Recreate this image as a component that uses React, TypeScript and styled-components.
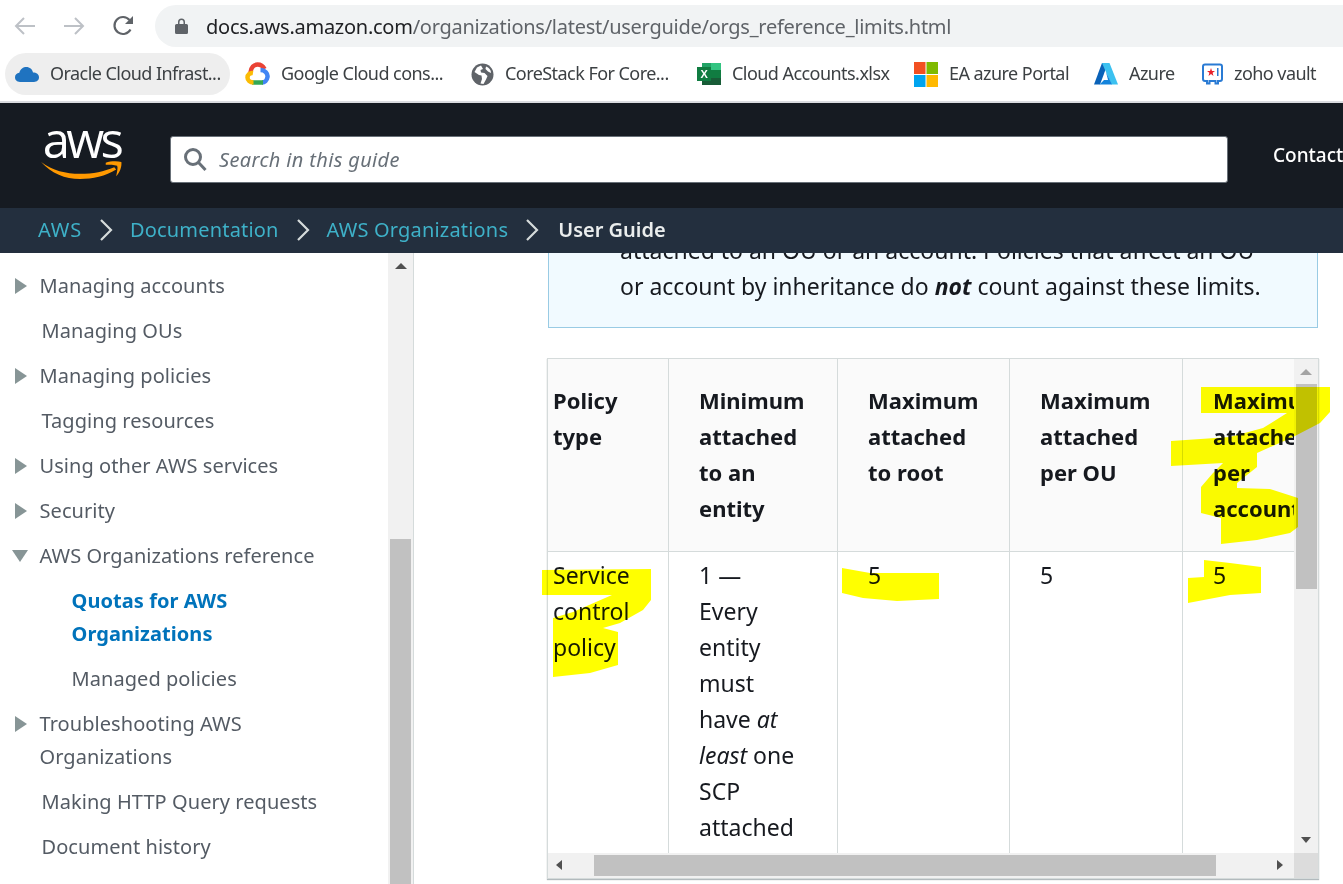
import React from "react";
import styled, { createGlobalStyle } from "styled-components";

const GlobalStyle = createGlobalStyle`
  html, body {
    margin: 0;
    padding: 0;
    background: #fff;
  }
  * {
    box-sizing: border-box;
  }
`;

const uiFont = `"Noto Sans", "Open Sans", Arial, sans-serif`;

const Page = styled.div`
  position: relative;
  width: 1343px;
  height: 884px;
  overflow: hidden;
  display: flex;
  flex-direction: column;
  font-family: ${uiFont};
  color: #16191f;
`;

const Toolbar = styled.div`
  height: 53px;
  display: flex;
  align-items: flex-start;
  padding: 5px 0 0 14px;
  flex-shrink: 0;
`;

const NavIcons = styled.div`
  width: 141px;
  height: 42px;
  display: flex;
  align-items: center;
  gap: 27px;
  flex-shrink: 0;
`;

const UrlBar = styled.div`
  flex: 1;
  height: 42px;
  margin-right: -30px;
  border-radius: 21px;
  background: #f1f3f4;
  display: flex;
  align-items: center;
  padding-left: 20px;
  gap: 18px;
  font-size: 20px;
  letter-spacing: -0.26px;
  color: #5f6368;
  white-space: nowrap;
`;

const Host = styled.span`
  color: #202124;
`;

const Bookmarks = styled.div`
  height: 50px;
  flex-shrink: 0;
  display: flex;
  align-items: flex-start;
  padding-left: 5px;
  gap: 5px;
  border-bottom: 2px solid #dadce0;
  white-space: nowrap;
`;

const Bookmark = styled.div<{ $active?: boolean; $width: number }>`
  width: ${(p) => p.$width}px;
  height: 42px;
  display: flex;
  align-items: center;
  gap: 11px;
  padding: 0 10px;
  border-radius: 21px;
  background: ${(p) => (p.$active ? "#eeeeee" : "transparent")};
  font-size: 18px;
  letter-spacing: -0.55px;
  color: #3c4043;
  flex-shrink: 0;
  svg {
    flex-shrink: 0;
  }
`;

const BookmarkLabel = styled.span`
  margin-top: -2px;
`;

const Header = styled.header`
  height: 105px;
  flex-shrink: 0;
  background: #161b22;
  display: flex;
  align-items: center;
  padding-left: 39px;
  white-space: nowrap;
`;

const Logo = styled.div`
  width: 85px;
  height: 56px;
  margin: -10px 46px 0 0;
  display: flex;
  flex-direction: column;
  align-items: center;
  flex-shrink: 0;
`;

const LogoWord = styled.span`
  font-family: "Open Sans", sans-serif;
  font-size: 49px;
  line-height: 36px;
  height: 36px;
  margin-top: -2px;
  margin-bottom: 3px;
  letter-spacing: -3.6px;
  color: #fff;
`;

const SearchBox = styled.div`
  width: 1058px;
  height: 47px;
  margin-top: 8px;
  flex-shrink: 0;
  background: #fff;
  border: 1px solid #687078;
  border-radius: 3px;
  display: flex;
  align-items: center;
  gap: 11px;
  padding-left: 12px;
  font-size: 20px;
  letter-spacing: 0.35px;
  font-style: italic;
  color: #687078;
`;

const ContactLink = styled.a`
  margin: 0 0 2px 45px;
  font-size: 19px;
  font-weight: 500;
  color: #fff;
`;

const Crumbs = styled.nav`
  height: 45px;
  flex-shrink: 0;
  background: #232f3e;
  display: flex;
  align-items: center;
  padding: 0 0 2px 38px;
  gap: 17px;
  font-size: 20px;
  letter-spacing: 0.18px;
  white-space: nowrap;
`;

const CrumbLink = styled.a<{ $spread?: boolean }>`
  color: #3eb1c8;
  letter-spacing: ${(p) => (p.$spread ? "0.8px" : "inherit")};
`;

const CrumbCurrent = styled.span`
  margin-left: 2px;
  color: #eaeded;
  font-weight: 600;
  letter-spacing: 0;
`;

const Body = styled.div`
  flex: 1;
  min-height: 0;
  display: flex;
`;

const Sidebar = styled.aside`
  width: 414px;
  flex-shrink: 0;
  display: flex;
  border-right: 1px solid #d5dbdb;
`;

const NavList = styled.ul`
  flex: 1;
  min-width: 0;
  margin: 0;
  padding: 15.5px 0 0;
  list-style: none;
  overflow: hidden;
  font-size: 20px;
  line-height: 33px;
  letter-spacing: 0.06px;
  color: #545b64;
`;

const NavItem = styled.li<{ $indent: number; $active?: boolean }>`
  position: relative;
  margin-bottom: 12px;
  padding-left: ${(p) => p.$indent}px;
  padding-right: 20px;
  color: ${(p) => (p.$active ? "#0073bb" : "inherit")};
  font-weight: ${(p) => (p.$active ? 700 : 400)};
`;

const Caret = styled.span<{ $open?: boolean }>`
  position: absolute;
  width: 0;
  height: 0;
  ${(p) =>
    p.$open
      ? `left: 12px;
         top: 11px;
         border-left: 8px solid transparent;
         border-right: 8px solid transparent;
         border-top: 12px solid #879596;`
      : `left: 15px;
         top: 9px;
         border-top: 8px solid transparent;
         border-bottom: 8px solid transparent;
         border-left: 12px solid #879596;`}
`;

const ScrollColumn = styled.div<{ $width: number }>`
  width: ${(p) => p.$width}px;
  flex-shrink: 0;
  background: #f1f1f1;
  display: flex;
  flex-direction: column;
  align-items: center;
`;

const ScrollThumbV = styled.div<{ $top: number; $height?: number }>`
  width: 21px;
  margin-top: ${(p) => p.$top}px;
  background: #c1c1c1;
  ${(p) => (p.$height ? `height: ${p.$height}px;` : "flex: 1;")}
  flex-shrink: 0;
`;

const ArrowUp = styled.span<{ $color: string; $top: number }>`
  width: 0;
  height: 0;
  margin-top: ${(p) => p.$top}px;
  border-left: 6px solid transparent;
  border-right: 6px solid transparent;
  border-bottom: 6px solid ${(p) => p.$color};
  flex-shrink: 0;
`;

const ArrowDown = styled.span`
  width: 0;
  height: 0;
  margin-top: auto;
  margin-bottom: 10px;
  border-left: 5px solid transparent;
  border-right: 5px solid transparent;
  border-top: 6px solid #505050;
`;

const Main = styled.main`
  flex: 1;
  min-width: 0;
  overflow: hidden;
  padding-left: 133px;
`;

const Note = styled.div`
  width: 770px;
  margin: -41px 0 0 1px;
  padding: 19px 0 23px 71px;
  background: #f1faff;
  border: 1px solid #99cbe4;
  font-size: 23px;
  line-height: 36px;
  white-space: nowrap;
`;

const TableFrame = styled.div`
  width: 772px;
  height: 521px;
  margin-top: 30px;
  border: 1px solid #d5dbdb;
  box-shadow: 0 1px 1px rgba(0, 28, 36, 0.3);
  display: grid;
  grid-template-columns: 746px 24px;
  grid-template-rows: 494px 25px;
`;

const TableViewport = styled.div`
  overflow: hidden;
`;

const QuotaTable = styled.table`
  width: 794px;
  table-layout: fixed;
  border-collapse: separate;
  border-spacing: 0;
  font-size: 23px;
  line-height: 36px;
`;

const HeadCell = styled.th<{ $pad: number; $width: number }>`
  width: ${(p) => p.$width}px;
  height: 192px;
  padding: 23px 24px 25px ${(p) => p.$pad}px;
  background: #fafafa;
  border-right: 1px solid #d5dbdb;
  border-bottom: 1px solid #d5dbdb;
  text-align: left;
  vertical-align: top;
  font-size: 22px;
  font-weight: 700;
`;

const BodyCell = styled.td<{ $pad: number }>`
  padding: 5px 38px 20px ${(p) => p.$pad}px;
  border-right: 1px solid #d5dbdb;
  vertical-align: top;
`;

const ScrollRow = styled.div`
  background: #f1f1f1;
  display: flex;
  align-items: center;
  padding: 0 0 1px 8px;
`;

const ScrollThumbH = styled.div`
  width: 622px;
  height: 21px;
  margin-left: 32px;
  background: #c1c1c1;
`;

const ArrowLeft = styled.span`
  width: 0;
  height: 0;
  border-top: 5px solid transparent;
  border-bottom: 5px solid transparent;
  border-right: 6px solid #505050;
`;

const ArrowRight = styled.span`
  width: 0;
  height: 0;
  margin-left: 61px;
  border-top: 5px solid transparent;
  border-bottom: 5px solid transparent;
  border-left: 6px solid #505050;
`;

const ScrollCorner = styled.div`
  background: #dcdcdc;
`;

const Marker = styled.svg`
  position: absolute;
  inset: 0;
  pointer-events: none;
  mix-blend-mode: multiply;
`;

const marks = [
  "1201,387 1330,387 1330,412 1320,423 1293,437 1257,453 1257,467 1237,483 1237,488 1270,489 1298,498 1298,527 1290,533 1257,540 1221,544 1221,518 1201,513 1201,487 1213,473 1223,463 1171,466 1171,441 1230,437 1263,428 1287,413 1201,413",
  "1204,560 1230,563 1261,567 1261,593 1230,595 1188,603 1188,578 1204,577",
  "842,568 870,573 939,573 939,599 897,601 863,598 842,593",
  "542,570 651,569 651,600 643,610 620,623 603,628 618,632 618,665 590,673 553,677 553,618 573,612 612,595 542,595",
];

const navItems = [
  { label: "Managing accounts", indent: 39.5, caret: "closed" },
  { label: "Managing OUs", indent: 41.5 },
  { label: "Managing policies", indent: 39.5, caret: "closed" },
  { label: "Tagging resources", indent: 41.5 },
  { label: "Using other AWS services", indent: 39.5, caret: "closed" },
  { label: "Security", indent: 39.5, caret: "closed" },
  { label: "AWS Organizations reference", indent: 39.5, caret: "open" },
  { label: "Quotas for AWS Organizations", indent: 71.5, active: true },
  { label: "Managed policies", indent: 71.5 },
  { label: "Troubleshooting AWS Organizations", indent: 39.5, caret: "closed" },
  { label: "Making HTTP Query requests", indent: 41.5 },
  { label: "Document history", indent: 41.5 },
  { label: "AWS glossary", indent: 41.5 },
];

const OracleIcon = () => (
  <svg width="24" height="16" viewBox="0 0 24 16">
    <path fill="#1f73c0" d="M5 16C2 16 0 14 0 11.300C0 8.800 1.800 7 4.300 6.800C5.300 3 8.300 1 11.300 1C14.800 1 17.300 3.300 18 6.500C21.500 6.500 24 8.500 24 11.300C24 14 22 16 19 16Z" />
  </svg>
);

const GoogleCloudIcon = () => (
  <svg width="25" height="24" viewBox="0 0 25 24" fill="none" strokeWidth="4.500">
    <path stroke="#ea4335" d="M5.500 10.500C6 5.500 9 2.500 12.500 2.500C15.500 2.500 18 4 19.500 7" />
    <path stroke="#4285f4" d="M15.500 8C20 8 23 11.500 22.500 15C22 18.500 19.500 20.500 17 20.500" />
    <path stroke="#34a853" d="M18 20.500H7" />
    <path stroke="#fbbc05" d="M8.500 20.500C5 20.500 2.500 18.500 2.500 15.500C2.500 12.500 5 10.500 8 11" />
  </svg>
);

const GlobeIcon = () => (
  <svg width="23" height="23" viewBox="0 0 23 23">
    <circle cx="11.500" cy="11.500" r="11" fill="#5f6368" />
    <path fill="#fff" d="M10 2.500L6 4.500L3.500 9L8 12L10.500 12.500L11 16L9.500 20.500L12.500 21L15 16.500L16.500 13L13.500 10L10 9.500L9.500 7L12 6ZM15 3.500L14.500 6L17 8.500L20 10C20 7 18 4.500 15 3.500Z" />
  </svg>
);

const ExcelIcon = () => (
  <svg width="24" height="22" viewBox="0 0 24 22">
    <rect x="5" width="19" height="22" fill="#21a366" />
    <rect x="14" width="10" height="7" fill="#33c481" />
    <rect x="5" y="15" width="19" height="7" fill="#185c37" />
    <rect x="14" y="7" width="10" height="8" fill="#107c41" />
    <rect y="4" width="14" height="14" fill="#107c41" />
    <text x="3.500" y="15" fontSize="11" fontWeight="700" fill="#fff" fontFamily="Liberation Sans, sans-serif">X</text>
  </svg>
);

const MicrosoftIcon = () => (
  <svg width="24" height="25" viewBox="0 0 24 25">
    <rect width="11.500" height="12" fill="#f25022" />
    <rect x="12.500" width="11.500" height="12" fill="#7fba00" />
    <rect y="13" width="11.500" height="12" fill="#00a4ef" />
    <rect x="12.500" y="13" width="11.500" height="12" fill="#ffb900" />
  </svg>
);

const AzureIcon = () => (
  <svg width="24" height="22" viewBox="0 0 24 22">
    <path fill="#0a62b8" d="M8 0H14L6 21.500H0Z" />
    <path fill="#3cc1f0" d="M8 0H15.500L24 21.500H17.500Z" />
    <path fill="#1384dc" d="M12 9L18 21.500H5.500L10 17H14Z" />
  </svg>
);

const ZohoIcon = () => (
  <svg width="21" height="22" viewBox="0 0 21 22">
    <path fill="none" stroke="#2a7bd4" strokeWidth="2" d="M3 1.500H18Q20 1.500 20 3.500V16Q20 18 18 18H16V20.500H13.500V18H7.500V20.500H5V18H3Q1 18 1 16V3.500Q1 1.500 3 1.500Z" />
    <path fill="#e8202a" d="M9 5L10 8H13L10.600 9.800L11.500 13L9 11L6.500 13L7.400 9.800L5 8H8Z" />
    <rect x="15" y="5" width="1.500" height="8" fill="#2a7bd4" />
  </svg>
);

const Chevron = () => (
  <svg width="14" height="24" viewBox="0 0 14 24" fill="none" stroke="#d5dbdb" strokeWidth="2.200">
    <path d="M2 2L12 12L2 22" />
  </svg>
);

export default function App() {
  return (
    <Page>
      <GlobalStyle />
      <Toolbar>
        <NavIcons>
          <svg width="22" height="20" viewBox="0 0 22 20" fill="none" stroke="#bdc1c6" strokeWidth="2">
            <path d="M21 10H2M10 2L2 10L10 18" />
          </svg>
          <svg width="22" height="20" viewBox="0 0 22 20" fill="none" stroke="#bdc1c6" strokeWidth="2">
            <path d="M1 10H20M12 2L20 10L12 18" />
          </svg>
          <svg width="22" height="22" viewBox="0 0 22 22" fill="none">
            <path stroke="#5f6368" strokeWidth="2.200" d="M18.500 14.500A8.500 8.500 0 1 1 17.500 5" />
            <path fill="#5f6368" d="M21 1V9H13Z" />
          </svg>
        </NavIcons>
        <UrlBar>
          <svg width="13" height="16" viewBox="0 0 13 16">
            <path fill="#5f6368" d="M1.500 6H3V4A3.500 3.500 0 0 1 10 4V6H11.500Q13 6 13 7.500V14.500Q13 16 11.500 16H1.500Q0 16 0 14.500V7.500Q0 6 1.500 6ZM4.500 6H8.500V4A2 2 0 0 0 4.500 4Z" />
          </svg>
          <span>
            <Host>docs.aws.amazon.com</Host>/organizations/latest/userguide/orgs_reference_limits.html
          </span>
        </UrlBar>
      </Toolbar>

      <Bookmarks>
        <Bookmark $active $width={225}>
          <OracleIcon />
          <BookmarkLabel>Oracle Cloud Infrast...</BookmarkLabel>
        </Bookmark>
        <Bookmark $width={221}>
          <GoogleCloudIcon />
          <BookmarkLabel>Google Cloud cons...</BookmarkLabel>
        </Bookmark>
        <Bookmark $width={221}>
          <GlobeIcon />
          <BookmarkLabel>CoreStack For Core...</BookmarkLabel>
        </Bookmark>
        <Bookmark $width={212}>
          <ExcelIcon />
          <BookmarkLabel>Cloud Accounts.xlsx</BookmarkLabel>
        </Bookmark>
        <Bookmark $width={175}>
          <MicrosoftIcon />
          <BookmarkLabel>EA azure Portal</BookmarkLabel>
        </Bookmark>
        <Bookmark $width={103}>
          <AzureIcon />
          <BookmarkLabel>Azure</BookmarkLabel>
        </Bookmark>
        <Bookmark $width={140}>
          <ZohoIcon />
          <BookmarkLabel>zoho vault</BookmarkLabel>
        </Bookmark>
      </Bookmarks>

      <Header>
        <Logo>
          <LogoWord>aws</LogoWord>
          <svg width="85" height="20" viewBox="0 0 85 20" fill="none">
            <path fill="#f90" d="M0 2C12 11 26 14.500 41 14.500C55 14.500 66 12 77 7.500L79 10C68 17 54 20 41 20C25 20 11 14 0 2Z" />
            <path fill="#f90" d="M68 3C73 1 80 1 84.500 2C85 7 83 13 79 17C80 12 81 8 80 6C77 5 72 5 68 5Z" />
          </svg>
        </Logo>
        <SearchBox>
          <svg width="25" height="25" viewBox="0 0 25 25" fill="none" stroke="#687078" strokeWidth="3">
            <circle cx="10" cy="10" r="7.500" />
            <path d="M15.500 15.500L22.500 23" />
          </svg>
          Search in this guide
        </SearchBox>
        <ContactLink>Contact Us</ContactLink>
      </Header>

      <Crumbs>
        <CrumbLink $spread>AWS</CrumbLink>
        <Chevron />
        <CrumbLink>Documentation</CrumbLink>
        <Chevron />
        <CrumbLink>AWS Organizations</CrumbLink>
        <Chevron />
        <CrumbCurrent>User Guide</CrumbCurrent>
      </Crumbs>

      <Body>
        <Sidebar>
          <NavList>
            {navItems.map((item) => (
              <NavItem key={item.label} $indent={item.indent} $active={item.active}>
                {item.caret && <Caret $open={item.caret === "open"} />}
                {item.label}
              </NavItem>
            ))}
          </NavList>
          <ScrollColumn $width={25}>
            <ArrowUp $color="#505050" $top={10} />
            <ScrollThumbV $top={270} />
          </ScrollColumn>
        </Sidebar>

        <Main>
          <Note>
            attached to an OU or an account. Policies that affect an OU
            <br />
            or account by inheritance do{" "}
            <strong>
              <em>not</em>
            </strong>{" "}
            count against these limits.
          </Note>

          <TableFrame>
            <TableViewport>
              <QuotaTable>
                <thead>
                  <tr>
                    <HeadCell $pad={5} $width={121}>Policy type</HeadCell>
                    <HeadCell $pad={30} $width={169}>Minimum attached to an entity</HeadCell>
                    <HeadCell $pad={30} $width={172}>Maximum attached to root</HeadCell>
                    <HeadCell $pad={30} $width={173}>Maximum attached per OU</HeadCell>
                    <HeadCell $pad={30} $width={159}>Maximum attached per account</HeadCell>
                  </tr>
                </thead>
                <tbody>
                  <tr>
                    <BodyCell $pad={5}>Service control policy</BodyCell>
                    <BodyCell $pad={30}>
                      1 — Every entity must have <em>at least</em> one SCP attached at all times.
                    </BodyCell>
                    <BodyCell $pad={30}>5</BodyCell>
                    <BodyCell $pad={30}>5</BodyCell>
                    <BodyCell $pad={30}>5</BodyCell>
                  </tr>
                </tbody>
              </QuotaTable>
            </TableViewport>
            <ScrollColumn $width={24}>
              <ArrowUp $color="#a3a3a3" $top={10} />
              <ScrollThumbV $top={9} $height={205} />
              <ArrowDown />
            </ScrollColumn>
            <ScrollRow>
              <ArrowLeft />
              <ScrollThumbH />
              <ArrowRight />
            </ScrollRow>
            <ScrollCorner />
          </TableFrame>
        </Main>
      </Body>

      <Marker width="1343" height="884" viewBox="0 0 1343 884">
        {marks.map((points) => (
          <polygon key={points} points={points} fill="#ffff00" />
        ))}
      </Marker>
    </Page>
  );
}
